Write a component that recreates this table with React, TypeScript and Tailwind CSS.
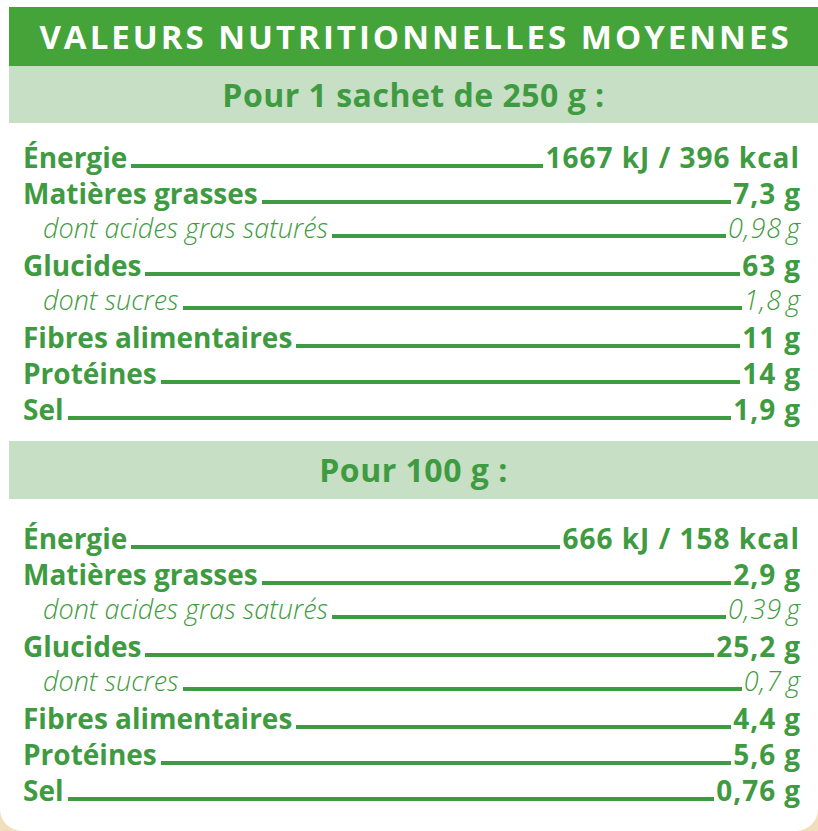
import React from "react";

type Item = { label: string; value: string; unit?: string; sub?: boolean };

const perSachet: Item[] = [
  { label: "Énergie", value: "1667 kJ / 396 kcal", unit: "" },
  { label: "Matières grasses", value: "7,3" },
  { label: "dont acides gras saturés", value: "0,98", sub: true },
  { label: "Glucides", value: "63" },
  { label: "dont sucres", value: "1,8", sub: true },
  { label: "Fibres alimentaires", value: "11" },
  { label: "Protéines", value: "14" },
  { label: "Sel", value: "1,9" },
];

const per100: Item[] = [
  { label: "Énergie", value: "666 kJ / 158 kcal", unit: "" },
  { label: "Matières grasses", value: "2,9" },
  { label: "dont acides gras saturés", value: "0,39", sub: true },
  { label: "Glucides", value: "25,2" },
  { label: "dont sucres", value: "0,7", sub: true },
  { label: "Fibres alimentaires", value: "4,4" },
  { label: "Protéines", value: "5,6" },
  { label: "Sel", value: "0,76" },
];

function Row({ item }: { item: Item }) {
  const unit = item.unit ?? "g";
  const style = item.sub ? "italic font-[350] text-[27px]" : "font-bold text-[28px]";
  return (
    <div className="flex items-baseline h-9">
      <span className={item.sub ? `pl-5 ${style}` : style}>{item.label}</span>
      <div className="flex-1 h-1 bg-[#3f9b41] ml-1 mr-0.5" />
      <span className={`${style} tracking-[1px]`}>{item.value}</span>
      {unit && <span className={item.sub ? `ml-1 ${style}` : `ml-2 ${style}`}>{unit}</span>}
    </div>
  );
}

export default function App() {
  return (
    <div className="w-[818px] h-[831px] bg-[#f1dfbb] overflow-hidden" style={{ fontFamily: "'Open Sans', 'Liberation Sans', sans-serif" }}>
      <div className="h-full bg-white rounded-b-[22px] pt-[7px] pl-[9px]">
        <div className="h-[59px] bg-[#44a439] flex items-center justify-center">
          <h1 className="text-white font-bold text-[33px] tracking-[3px] pl-1">VALEURS NUTRITIONNELLES MOYENNES</h1>
        </div>
        <div className="h-[57px] bg-[#c7dfc4] flex items-center justify-center">
          <h2 className="text-[#3f9b41] font-bold text-[32px] tracking-[0.5px]">Pour 1 sachet de 250 g :</h2>
        </div>
        <div className="pt-[13px] pl-[14px] pr-[18px] text-[#3f9b41]">
          {perSachet.map((item) => (
            <Row key={item.label} item={item} />
          ))}
        </div>
        <div className="mt-[17px] h-[58px] bg-[#c7dfc4] flex items-center justify-center">
          <h2 className="text-[#3f9b41] font-bold text-[32px] tracking-[0.5px]">Pour 100 g :</h2>
        </div>
        <div className="pt-[18px] pl-[14px] pr-[18px] text-[#3f9b41]">
          {per100.map((item) => (
            <Row key={item.label} item={item} />
          ))}
        </div>
      </div>
    </div>
  );
}
